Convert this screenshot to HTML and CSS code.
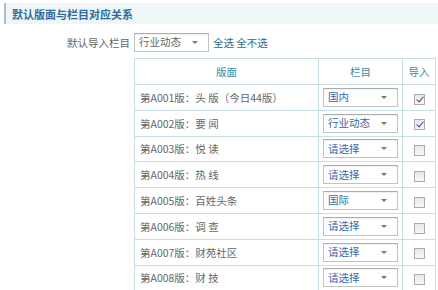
FILE: index.html
```html
<!DOCTYPE html>
<html>
<head>
<meta charset="utf-8">
<link rel="stylesheet" href="styles.css">
</head>
<body>
<div class="bar"><span class="bar-title">默认版面与栏目对应关系</span></div>
<div class="form">
  <div class="label">默认导入栏目</div>
  <div class="field">
    <div class="sel sel-top"><span class="sel-text">行业动态</span><span class="arrow"></span></div>
    <span class="links"><a class="lnk">全选</a> <a class="lnk">全不选</a></span>
  </div>
  <div></div>
  <table class="grid">
    <thead>
      <tr><th class="c1">版面</th><th class="c2">栏目</th><th class="c3">导入</th></tr>
    </thead>
    <tbody>
      <tr><td class="c1">第A001版：头 版（今日44版）</td><td class="c2"><div class="sel"><span class="sel-text">国内</span><span class="arrow"></span></div></td><td class="c3"><span class="cb on"></span></td></tr>
      <tr><td class="c1">第A002版：要 闻</td><td class="c2"><div class="sel"><span class="sel-text">行业动态</span><span class="arrow"></span></div></td><td class="c3"><span class="cb on"></span></td></tr>
      <tr><td class="c1">第A003版：悦 读</td><td class="c2"><div class="sel"><span class="sel-text">请选择</span><span class="arrow"></span></div></td><td class="c3"><span class="cb"></span></td></tr>
      <tr><td class="c1">第A004版：热 线</td><td class="c2"><div class="sel"><span class="sel-text">请选择</span><span class="arrow"></span></div></td><td class="c3"><span class="cb"></span></td></tr>
      <tr><td class="c1">第A005版：百姓头条</td><td class="c2"><div class="sel"><span class="sel-text">国际</span><span class="arrow"></span></div></td><td class="c3"><span class="cb"></span></td></tr>
      <tr><td class="c1">第A006版：调 查</td><td class="c2"><div class="sel"><span class="sel-text">请选择</span><span class="arrow"></span></div></td><td class="c3"><span class="cb"></span></td></tr>
      <tr><td class="c1">第A007版：财苑社区</td><td class="c2"><div class="sel"><span class="sel-text">请选择</span><span class="arrow"></span></div></td><td class="c3"><span class="cb"></span></td></tr>
      <tr><td class="c1">第A008版：财 技</td><td class="c2"><div class="sel"><span class="sel-text">请选择</span><span class="arrow"></span></div></td><td class="c3"><span class="cb"></span></td></tr>
    </tbody>
  </table>
</div>
</body>
</html>
```
FILE: styles.css
```css
html, body {
  margin: 0;
  padding: 0;
  background: #ffffff;
  font-family: "Noto Sans CJK SC", "Noto Sans", sans-serif;
  font-size: 10.5px;
  color: #666666;
}
.bar {
  margin: 3px 0 0 4px;
  height: 21px;
  background: #eef6f8;
  border-left: 2px solid #a9c1cf;
  display: flex;
  align-items: center;
  padding-left: 6px;
}
.bar-title {
  font-size: 11px;
  font-weight: bold;
  color: #2f6c9c;
}
.form {
  display: grid;
  grid-template-columns: 130px 299px;
  column-gap: 4px;
  row-gap: 6px;
  margin-top: 9px;
}
.label {
  text-align: right;
  align-self: center;
  color: #666;
}
.field {
  display: flex;
  align-items: center;
  gap: 4px;
}
.sel {
  box-sizing: border-box;
  width: 75px;
  height: 19px;
  border: 1px solid #c2c2c2;
  border-top-color: #acacac;
  background: #fff;
  display: flex;
  align-items: center;
  justify-content: space-between;
  padding: 0 10px 0 4px;
  box-shadow: inset 0 1px 1px rgba(0,0,0,0.06);
}
.sel-text {
  color: #3569a8;
  line-height: 1;
}
.sel-top .sel-text {
  color: #666;
}
.arrow {
  width: 0;
  height: 0;
  border-left: 3px solid transparent;
  border-right: 3px solid transparent;
  border-top: 3px solid #777;
}
.links {
  color: #2a6b8c;
}
.lnk {
  color: #2a6b8c;
  text-decoration: none;
}
.grid {
  border-collapse: collapse;
  width: 299px;
  table-layout: fixed;
}
.grid th, .grid td {
  border: 1px solid #c9dde4;
  padding: 0;
  height: 24.8px;
}
.grid th {
  font-weight: normal;
  color: #3a8ca6;
  text-align: center;
  height: 25px;
}
.grid td.c1 {
  padding-left: 5px;
  color: #666;
}
.grid .c1 { width: 183px; }
.grid .c2 { width: 83px; }
.grid .c3 { width: 32px; }
.grid td.c2 {
  padding-left: 4px;
}
.grid td.c3 {
  text-align: center;
}
.cb {
  display: inline-block;
  box-sizing: border-box;
  width: 11px;
  height: 11px;
  border: 1px solid #ababab;
  background: linear-gradient(#e9e9e9, #f7f7f7);
  vertical-align: middle;
  position: relative;
}
.cb.on::after {
  content: "";
  position: absolute;
  left: 3px;
  top: 0px;
  width: 3px;
  height: 6px;
  border-right: 1.5px solid #34508a;
  border-bottom: 1.5px solid #34508a;
  transform: rotate(40deg);
}
```
